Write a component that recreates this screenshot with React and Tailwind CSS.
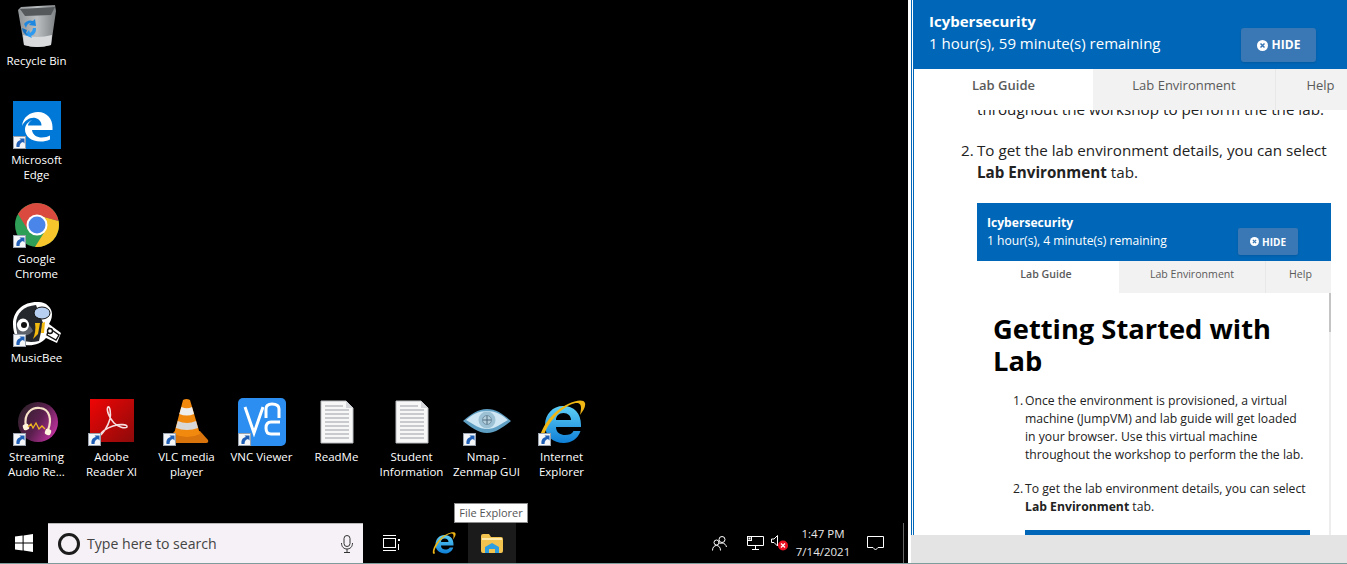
const winFont = "font-['Open_Sans','Noto_Sans',sans-serif]";

const Shortcut = () => (
  <g>
    <rect x="0.5" y="35.5" width="12" height="12" fill="#f4f6f8" stroke="#9aa3ad" />
    <path d="M3.5 46 C3 41.5 5 39.5 8 39 L6.5 37.5 L11.5 37.5 L11.5 42.5 L10 41 C8 41.5 6.5 43 6.5 46 Z" fill="#1f5fb5" />
  </g>
);

const RecycleBin = () => (
  <svg width="48" height="48" viewBox="0 0 48 48">
    <defs>
      <linearGradient id="binBody" x1="0" x2="1" y1="0" y2="0">
        <stop offset="0" stopColor="#8f9496" />
        <stop offset="0.5" stopColor="#bcbfc1" />
        <stop offset="1" stopColor="#7d8184" />
      </linearGradient>
    </defs>
    <path d="M5 8 L8 5 L42 3 L43 9 L38 43 Q24 47 11 43 Z" fill="url(#binBody)" />
    <path d="M7 7 L42 5 L38 13 L12 14 Z" fill="#56595b" />
    <path d="M10 33 Q24 37 39 33 L38 43 Q24 47 11 43 Z" fill="#d8dadc" />
    <path d="M11 22 A8 8 0 0 1 20 19 L22 17 L23 24 L16 23 L18 21 Q14 21 13 26 Z" fill="#1e88e0" />
    <path d="M23 26 A8 8 0 0 1 18 34 L19 36 L12 33 L16 28 L17 31 Q20 29 20 26 Z" fill="#2f9bf0" />
    <path d="M9 26 L14 28 L13 31 L15 33 Q10 33 9 26 Z" fill="#1670c0" />
  </svg>
);

const EdgeIcon = () => (
  <svg width="48" height="48" viewBox="0 0 48 48">
    <rect width="48" height="48" fill="#0078d7" />
    <path
      fillRule="evenodd"
      d="M9 25 C10 16 17 11 25 11 C34 11 39.5 18 39.5 26 L39.5 29 L19 29 C19.5 34 24 36.5 29 36.5 C32 36.5 35 35.5 37 34.5 L37 38.5 C34 40 31 40.5 27.5 40.5 C18 40.5 12 35 12 28.5 C12 24 15 21 19 19 C16 21 15 23 15 24.5 L28.5 24.5 C28.5 20.5 26 18 22.5 17 C17 16 12 19 9 25 Z"
      fill="#fff"
    />
    <Shortcut />
  </svg>
);

const ChromeIcon = () => (
  <svg width="48" height="48" viewBox="0 0 48 48">
    <circle cx="24" cy="25" r="22" fill="#2f9e57" />
    <path d="M45.6 21 A22 22 0 0 1 22 47 L32 31 L24 15 Z" fill="#f7c52c" />
    <path d="M5 14 A22 22 0 0 1 45.6 21 L24 15 L15 30 Z" fill="#db4a3f" />
    <circle cx="24" cy="25" r="10.5" fill="#fff" />
    <circle cx="24" cy="25" r="8.5" fill="#4a86ea" />
    <Shortcut />
  </svg>
);

const MusicBeeIcon = () => (
  <svg width="48" height="48" viewBox="0 0 48 48">
    <path d="M0 25 C0 12 10 3 24 3 C32 2 39 8 39 15 C39 20 37 23 36 25 L48 34 L44 44 L33 39 C28 45 20 47 12 46 C4 43 0 35 0 25 Z" fill="#fff" />
    <path d="M3 25 C3 14 11 7 23 6 L30 24 L26 42 C17 44 8 43 5 37 C4 33 3 29 3 25 Z" fill="#24272c" />
    <path d="M3 25 C8 20 15 22 20 32 C15 38 9 37 5 36 Z" fill="#5e636b" />
    <ellipse cx="10" cy="26" rx="6" ry="6.5" fill="#fff" />
    <circle cx="11" cy="26" r="3" fill="#111" />
    <ellipse cx="29" cy="14" rx="8" ry="6" fill="#b7d0f2" stroke="#111" strokeWidth="1" />
    <path d="M22 24 C23 30 22 35 20 40 L25 35 L27 24 Z M29 24 L28 34 L31 34 L32 23 Z" fill="#f2b90f" />
    <path d="M36 29 L46 36 L43 41 L34 36 Z" fill="#fff" stroke="#111" strokeWidth="1.4" />
    <circle cx="37" cy="32" r="2.5" fill="#fff" stroke="#111" strokeWidth="1.4" />
    <Shortcut />
  </svg>
);

const StreamingIcon = () => (
  <svg width="48" height="48" viewBox="0 0 48 48">
    <defs>
      <linearGradient id="streamBall" x1="0" x2="1" y1="0.1" y2="0.7">
        <stop offset="0" stopColor="#2a2226" />
        <stop offset="0.55" stopColor="#5b1f4e" />
        <stop offset="1" stopColor="#c0329f" />
      </linearGradient>
    </defs>
    <circle cx="25" cy="24" r="20" fill="url(#streamBall)" />
    <path d="M13 29 C10 14 20 9 27 10 C37 11 39 22 35 32" fill="none" stroke="#f7e3c8" strokeWidth="2.2" />
    <rect x="10" y="26" width="6" height="6" rx="2" fill="#fff4dc" transform="rotate(-20 13 29)" />
    <rect x="32" y="31" width="6" height="6" rx="2" fill="#fff4dc" transform="rotate(20 35 34)" />
    <path d="M15 29 L18 26 L20 30 L23 25 L26 31 L29 28 L32 31" fill="none" stroke="#f0b920" strokeWidth="1.3" />
    <Shortcut />
  </svg>
);

const AdobeIcon = () => (
  <svg width="48" height="48" viewBox="0 0 48 48">
    <defs>
      <linearGradient id="adobeRed" x1="0" x2="1" y1="0" y2="1">
        <stop offset="0" stopColor="#f00505" />
        <stop offset="1" stopColor="#8c0a0a" />
      </linearGradient>
    </defs>
    <rect x="2" y="1" width="44" height="43" fill="url(#adobeRed)" />
    <path
      d="M11 38 C15 36 20 28 22 21 C23 15 22 8 20 9 C18 11 21 20 26 25 C30 29 37 31 39 29 C40 26 31 26 25 28 C19 30 14 33 11 38 Z"
      fill="none"
      stroke="#f6dede"
      strokeWidth="1.6"
    />
    <Shortcut />
  </svg>
);

const VlcIcon = () => (
  <svg width="48" height="48" viewBox="0 0 48 48">
    <path d="M8 37 L12 33 L37 33 L45 42 Q46 45 43 45 L8 45 Q3 44 8 37 Z" fill="#d9740c" />
    <path d="M20 2 Q23.5 0 27 2 L37 36 Q24 42 11 36 Z" fill="#f2890f" />
    <path d="M18.4 9 Q24 11.5 29 9 L31 16 Q24 19 16.3 16 Z" fill="#eeeeee" />
    <path d="M14.8 23 Q24 27 33 23 L35 30 Q24 34 12.8 30 Z" fill="#d8d8d8" />
    <Shortcut />
  </svg>
);

const VncIcon = () => (
  <svg width="48" height="48" viewBox="0 0 48 48">
    <rect width="48" height="48" rx="5" fill="#2b8ef0" />
    <path d="M7 9 L16 35 L25 9" fill="none" stroke="#fff" strokeWidth="3" />
    <path d="M28 20 L28 11 Q28 6 34 6 Q41 6 41 11 L41 20" fill="none" stroke="#fff" strokeWidth="3" />
    <path d="M42 24 L33 24 Q28 24 28 30 Q28 36 33 36 L42 36" fill="none" stroke="#fff" strokeWidth="3" />
    <Shortcut />
  </svg>
);

const DocIcon = () => (
  <svg width="48" height="48" viewBox="0 0 48 48">
    <path d="M8 3 L33 3 L40 10 L40 45 L8 45 Z" fill="#f7f7f7" stroke="#b9bcc0" />
    <path d="M33 3 L33 10 L40 10 Z" fill="#d4d6d9" />
    <path
      d="M12 8 H30 M12 12 H36 M12 16 H36 M12 20 H36 M12 24 H36 M12 28 H36 M12 32 H36 M12 36 H36 M12 40 H36"
      stroke="#9a9da2"
      strokeWidth="1"
    />
  </svg>
);

const NmapIcon = () => (
  <svg width="48" height="48" viewBox="0 0 48 48">
    <path d="M0 23 C8 16 15 11 24 11 C33 11 40 16 48 23 C40 29 33 35 24 35 C15 35 8 29 0 23 Z" fill="#5f9fc4" />
    <path d="M3 22 C10 16 16 13 24 13 C32 13 38 16 45 22 C38 26 32 31 24 31 C16 31 10 26 3 22 Z" fill="#cfe7f4" />
    <circle cx="24" cy="22" r="8.5" fill="#9cc0d4" />
    <circle cx="24" cy="22" r="4.5" fill="#b6cfdc" stroke="#6f8fa3" />
    <path d="M24 18 V26 M20 22 H28" stroke="#4c6a7e" strokeWidth="1" />
    <Shortcut />
  </svg>
);

const IeIcon = ({ size = 48, shortcut = true, idSuffix = 'a' }) => (
  <svg width={size} height={size} viewBox="0 0 48 48">
    <defs>
      <linearGradient id={`ieBlue${idSuffix}`} x1="0" x2="0" y1="0" y2="1">
        <stop offset="0" stopColor="#5fd0f7" />
        <stop offset="1" stopColor="#0f7fd6" />
      </linearGradient>
    </defs>
    <path
      fillRule="evenodd"
      d="M25 8 C36 8 43 15 43 27 L43 29 L18 29 C18 35 23 37 27 37 C31 37 34 36 35.5 33 L42.5 33 C40 41 33 45 26 45 C15 45 7 38 7 27 C7 16 15 8 25 8 Z M18 22 L33 22 C33 18 30 15 25.5 15 C21 15 18 18 18 22 Z"
      fill={`url(#ieBlue${idSuffix})`}
    />
    <path
      d="M2 45 C-1 36 12 14 30 6 C38 2 46 1 47 5 C48 9 45 13 42 17 C43 12 44 7 41 5.5 C35 3 18 13 8 32 C5 38 4 42 6 44 C5 46 3 46 2 45 Z"
      fill="#f0b614"
    />
    {shortcut && <Shortcut />}
  </svg>
);

const desktopIcons = [
  { cell: 'col-start-1 row-start-1', icon: <RecycleBin />, lines: ['Recycle Bin'] },
  { cell: 'col-start-1 row-start-2', icon: <EdgeIcon />, lines: ['Microsoft', 'Edge'] },
  { cell: 'col-start-1 row-start-3', icon: <ChromeIcon />, lines: ['Google', 'Chrome'] },
  { cell: 'col-start-1 row-start-4', icon: <MusicBeeIcon />, lines: ['MusicBee'] },
  { cell: 'col-start-1 row-start-5', icon: <StreamingIcon />, lines: ['Streaming', 'Audio Re...'] },
  { cell: 'col-start-2 row-start-5', icon: <AdobeIcon />, lines: ['Adobe', 'Reader XI'] },
  { cell: 'col-start-3 row-start-5', icon: <VlcIcon />, lines: ['VLC media', 'player'] },
  { cell: 'col-start-4 row-start-5', icon: <VncIcon />, lines: ['VNC Viewer'] },
  { cell: 'col-start-5 row-start-5', icon: <DocIcon />, lines: ['ReadMe'] },
  { cell: 'col-start-6 row-start-5', icon: <DocIcon />, lines: ['Student', 'Information'] },
  { cell: 'col-start-7 row-start-5', icon: <NmapIcon />, lines: ['Nmap -', 'Zenmap GUI'] },
  { cell: 'col-start-8 row-start-5', icon: <IeIcon />, lines: ['Internet', 'Explorer'] },
];

const DesktopIcon = ({ cell, icon, lines }) => (
  <div className={`${cell} flex flex-col items-center`}>
    {icon}
    <div className="mt-[3px] text-center text-[11.5px] leading-[15px] text-white whitespace-nowrap">
      {lines.map((line) => (
        <div key={line}>{line}</div>
      ))}
    </div>
  </div>
);

const Taskbar = () => (
  <div className="relative flex h-10 items-stretch bg-black">
    <div className="flex w-12 items-center justify-center">
      <svg width="18" height="18" viewBox="0 0 18 18" fill="#fff">
        <path d="M0 2.6 L7.6 1.5 V8.5 H0 Z M8.6 1.4 L18 0 V8.5 H8.6 Z M0 9.5 H7.6 V16.5 L0 15.4 Z M8.6 9.5 H18 V18 L8.6 16.6 Z" />
      </svg>
    </div>

    <div className="flex w-[315px] items-center border-t border-[#b8b8b8] bg-[#f5f1f6] pl-[10px] pr-[10px]">
      <div className="h-[22px] w-[22px] rounded-full border-[3px] border-[#1c1c1c]" />
      <span className="ml-[7px] flex-1 text-[14.1px] text-[#444]">Type here to search</span>
      <svg width="12" height="18" viewBox="0 0 12 18" fill="none" stroke="#333" strokeWidth="1">
        <rect x="3" y="0.5" width="6" height="11" rx="3" />
        <path d="M0.5 8 C0.5 12 3 14 6 14 C9 14 11.5 12 11.5 8 M6 14 V17.5 M3 17.5 H9" />
      </svg>
    </div>

    <div className="flex w-[57px] items-center justify-center">
      <svg width="17" height="16" viewBox="0 0 17 16" fill="none" stroke="#fff" strokeWidth="1">
        <path d="M0 0.5 H13 M0 15.5 H13" />
        <rect x="0.5" y="3.5" width="12" height="9" />
        <rect x="15" y="4" width="2" height="2" fill="#fff" stroke="none" />
        <rect x="15" y="9" width="1" height="6" fill="#fff" stroke="none" />
      </svg>
    </div>

    <div className="flex w-12 items-center justify-center">
      <IeIcon size={24} shortcut={false} idSuffix="b" />
    </div>

    <div className="flex w-12 items-center justify-center bg-[#1b1b1b]">
      <svg width="22" height="19" viewBox="0 0 22 19">
        <path d="M0 2 Q0 0 2 0 L8 0 L10 3 L20 3 Q22 3 22 5 L22 17 Q22 19 20 19 L2 19 Q0 19 0 17 Z" fill="#f3c350" />
        <path d="M1 4 H21 V6 H1 Z" fill="#ffe9a8" />
        <path d="M4 19 V13 L11 9 L18 13 V19 H14 V15 H8 V19 Z" fill="#2d9fe0" />
      </svg>
    </div>

    <div className="flex-1" />

    <div className="flex w-9 items-center justify-center">
      <svg width="15" height="15" viewBox="0 0 15 15" fill="none" stroke="#fff" strokeWidth="1">
        <circle cx="10" cy="3.5" r="3" />
        <circle cx="4.5" cy="6.5" r="2.5" />
        <path d="M0.5 14.5 C0.5 11 2.5 9.5 4.5 9.5 C6.5 9.5 8.5 11 8.5 14.5 M6.5 6.5 C8 7.5 8 7.5 10 7 C12.5 7 14 9 14.5 11" />
      </svg>
    </div>
    <div className="flex w-9 items-center justify-center">
      <svg width="17" height="14" viewBox="0 0 17 14" fill="none" stroke="#fff" strokeWidth="1">
        <path d="M5 0.5 H16.5 V9.5 H0.5 V5" />
        <path d="M8.5 9.5 V13 M5 13.5 H12" />
        <rect x="0.5" y="0.5" width="4" height="4" />
        <rect x="1.5" y="1.5" width="2" height="2" fill="#fff" stroke="none" />
      </svg>
    </div>
    <div className="-ml-[2px] flex w-[19px] items-center">
      <svg width="19" height="16" viewBox="0 0 19 16">
        <path d="M0.5 4 H3 L6.5 0.5 V11 L3 7.5 H0.5 Z" fill="none" stroke="#fff" strokeWidth="1" />
        <circle cx="12" cy="10.5" r="5" fill="#e81123" />
        <path d="M10 8.5 L14 12.5 M14 8.5 L10 12.5" stroke="#fff" strokeWidth="1.2" />
      </svg>
    </div>
    <div className="flex w-[66px] flex-col items-center justify-center text-[11.5px] leading-[18px] text-[#e8e8e8]">
      <span>1:47 PM</span>
      <span>7/14/2021</span>
    </div>
    <div className="flex w-[38px] items-center justify-center">
      <svg width="17" height="15" viewBox="0 0 17 15" fill="none" stroke="#fff" strokeWidth="1">
        <path d="M0.5 0.5 H16.5 V11.5 H11 L8.5 14 L6 11.5 H0.5 Z" />
      </svg>
    </div>
    <div className="ml-[9px] mr-1 w-px bg-[#666]" />
  </div>
);

const Desktop = () => (
  <div className="relative flex w-[908px] flex-col bg-black">
    <div className="-ml-px mt-[2px] grid flex-1 grid-cols-[repeat(8,75px)] grid-rows-[repeat(5,99px)]">
      {desktopIcons.map((item) => (
        <DesktopIcon key={item.lines[0]} {...item} />
      ))}
    </div>
    <Taskbar />
    {/* tooltip of the hovered taskbar button */}
    <div className="absolute left-[454px] top-[503px] flex h-5 w-[74px] items-center justify-center border border-[#8c8c8c] bg-white text-[11px] text-[#555]">
      File Explorer
    </div>
  </div>
);

const HideButton = ({ small }) => (
  <div
    className={
      small
        ? 'flex h-[27px] w-[60px] items-center justify-center gap-[3px] rounded-[2px] bg-[#3a78b5] text-[10px] font-bold text-white shadow-sm'
        : 'flex h-[34px] w-[75px] items-center justify-center gap-[4px] rounded-[3px] bg-[#3a78b5] text-[12px] font-bold text-white shadow-sm'
    }
  >
    <svg width={small ? 9 : 11} height={small ? 9 : 11} viewBox="0 0 11 11">
      <circle cx="5.5" cy="5.5" r="5.5" fill="#fff" />
      <path d="M3.5 3.5 L7.5 7.5 M7.5 3.5 L3.5 7.5" stroke="#3a78b5" strokeWidth="1.5" />
    </svg>
    HIDE
  </div>
);

const LabPanel = () => (
  <div className="flex flex-1 flex-col bg-white text-[#222]">
    <div className="flex h-[535px] flex-col border-l border-[#0067b8] pl-[1px]">
      <div className="flex flex-1 flex-col border-l border-[#0067b8] overflow-hidden">
        <div className="flex h-[69px] justify-between bg-[#0067b8] pl-[15px] pr-[31px] text-white">
          <div className="pt-[10px] text-[15px] leading-[22px]">
            <div className="font-bold">Icybersecurity</div>
            <div>1 hour(s), 59 minute(s) remaining</div>
          </div>
          <div className="pt-[28px]">
            <HideButton />
          </div>
        </div>

        <div className="flex h-[41px] text-[13px] text-[#5a5a5a]">
          <div className="flex w-[179px] items-center justify-center pb-[8px] font-semibold">Lab Guide</div>
          <div className="flex w-[182px] items-center justify-center bg-[#f2f2f2] pb-[8px]">Lab Environment</div>
          <div className="flex flex-1 items-center justify-center border-l border-[#e8e8e8] bg-[#f2f2f2] pb-[8px] pl-[18px]">Help</div>
        </div>

        <div className="flex-1 overflow-hidden pl-[47px] pr-[16px] text-[15.2px] leading-[22px]">
          <div className="-mt-[12px] whitespace-nowrap pl-[16px]">throughout the workshop to perform the the lab.</div>
          <div className="mt-[19px] flex">
            <span className="w-[16px] shrink-0">2.</span>
            <div className="whitespace-nowrap">
              To get the lab environment details, you can select
              <br />
              <b>Lab Environment</b> tab.
            </div>
          </div>

          <div className="ml-[16px] mt-[20px] w-[354px]">
            <div className="flex h-[58px] justify-between bg-[#0067b8] pl-[10px] pr-[33px] text-white">
              <div className="pt-[11px] text-[12.1px] leading-[18px]">
                <div className="font-bold">Icybersecurity</div>
                <div>1 hour(s), 4 minute(s) remaining</div>
              </div>
              <div className="pt-[25px]">
                <HideButton small />
              </div>
            </div>
            <div className="flex h-[32px] text-[10.6px] text-[#5a5a5a]">
              <div className="flex w-[142px] items-center justify-center pb-[6px] pr-[4px] font-semibold">Lab Guide</div>
              <div className="flex w-[146px] items-center justify-center bg-[#f2f2f2] pb-[6px]">Lab Environment</div>
              <div className="flex flex-1 items-center justify-center border-l border-[#e8e8e8] bg-[#f2f2f2] pb-[6px] pl-[4px]">Help</div>
            </div>
            <div className="relative h-[260px] pl-[16px] pr-[20px]">
              <div className="pt-[20px] font-bold text-[27.3px] leading-[32px] text-black whitespace-nowrap">
                Getting Started with
                <br />
                Lab
              </div>
              <div className="mt-[15px] flex text-[12.2px] leading-[18px]">
                <span className="ml-[20px] w-[12px] shrink-0">1.</span>
                <div className="whitespace-nowrap">
                  Once the environment is provisioned, a virtual
                  <br />
                  machine (JumpVM) and lab guide will get loaded
                  <br />
                  in your browser. Use this virtual machine
                  <br />
                  throughout the workshop to perform the the lab.
                </div>
              </div>
              <div className="mt-[16px] flex text-[12.2px] leading-[18px]">
                <span className="ml-[20px] w-[12px] shrink-0">2.</span>
                <div className="whitespace-nowrap">
                  To get the lab environment details, you can select
                  <br />
                  <b>Lab Environment</b> tab.
                </div>
              </div>
              <div className="ml-[32px] mr-[1px] mt-[14px] h-[6px] bg-[#0067b8]" />
              {/* inner scrollbar */}
              <div className="absolute right-0 top-0 h-full w-[2px] bg-[#ededed]">
                <div className="h-[39px] bg-[#c4c4c4]" />
              </div>
            </div>
          </div>
        </div>
      </div>
    </div>
    <div className="flex-1 bg-[#e4e4e4]" />
  </div>
);

export default function App() {
  return (
    <div className={`flex h-[564px] w-[1347px] flex-col overflow-hidden bg-white ${winFont}`}>
      <div className="flex h-[563px]">
        <Desktop />
        <div className="w-[3px] bg-white" />
        <LabPanel />
      </div>
      <div className="h-px bg-[#7f9c9c]" />
    </div>
  );
}
